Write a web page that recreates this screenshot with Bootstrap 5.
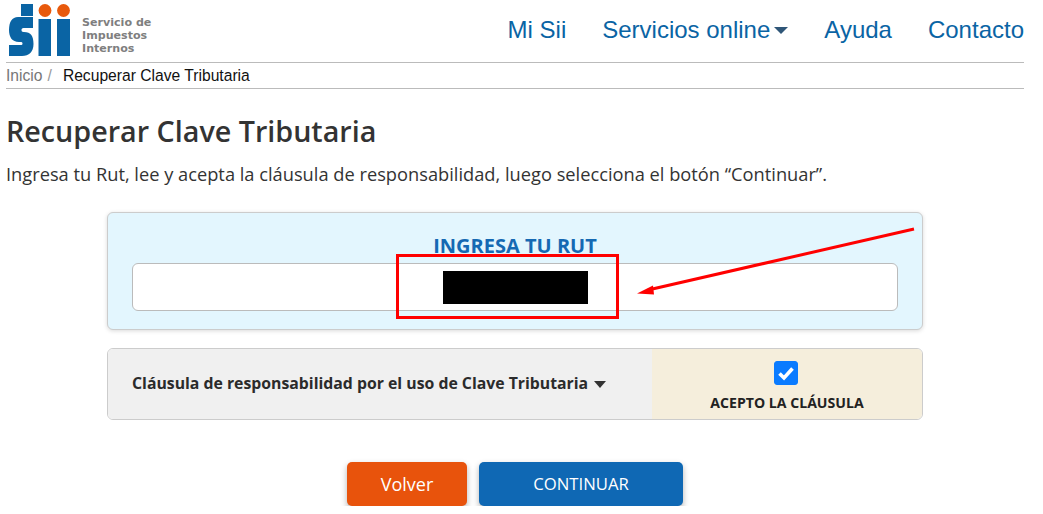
<!doctype html>
<html lang="es">
<head>
<meta charset="utf-8">
<title>Recuperar Clave Tributaria</title>
<link href="https://cdn.jsdelivr.net/npm/bootstrap@5.3.0/dist/css/bootstrap.min.css" rel="stylesheet">
<style>
body{font-family:"Open Sans",sans-serif;color:#333;background:#fff;overflow:hidden}
.page-wrap{width:1018px;margin-left:6px}
.site-head{height:63px;border-bottom:1px solid #bbb}
.logo-box{gap:10px;margin-left:2px;align-self:flex-start;padding-top:2px}
.logo-text{font-family:"DejaVu Sans",sans-serif;font-weight:700;font-size:11.1px;line-height:13px;color:#7f7f7f;padding-top:14px;white-space:nowrap}
.site-nav{gap:36px;padding-bottom:2px}
.site-nav a{font-family:"Liberation Sans",sans-serif;font-size:24px;color:#0a64a4;text-decoration:none;display:flex;align-items:center}
.nav-caret{width:0;height:0;border-left:7px solid transparent;border-right:7px solid transparent;border-top:7px solid #2f5678;margin-left:4px}
.crumbs{height:26px;border-bottom:1px solid #bbb;font-family:"Liberation Sans",sans-serif;font-size:15.65px;line-height:25px}
.crumbs .crumb-home{color:#777}
.crumbs .crumb-sep{color:#999;margin:0 11px 0 5px}
.crumbs .crumb-now{color:#111}
.page-title{font-size:28.7px;font-weight:600;color:#333;margin:24px 0 0;line-height:36px}
.page-lead{font-size:18.25px;color:#333;margin:13px 0 0;line-height:24px}
.form-area{width:816px;margin:26px auto 0}
.rut-panel{height:118px;background:#e3f6fe;border:1px solid #ccc;border-radius:6px;box-shadow:0 1px 4px rgba(0,0,0,.15);padding:21px 24px 0}
.rut-label{font-size:20px;font-weight:700;color:#1569b3;text-align:center;line-height:24px;margin-bottom:5px}
.rut-input{height:48px;border:1px solid #bbb;border-radius:6px;background:#fff;box-shadow:none}
.clause-panel{height:72px;margin-top:18px;border:1px solid #ccc;border-radius:6px;overflow:hidden}
.clause-text{flex:0 0 544px;background:#f0f0f0;padding-left:24px;font-size:15.8px;font-weight:700;color:#2b2b2b}
.clause-caret{display:inline-block;width:0;height:0;border-left:6.5px solid transparent;border-right:6.5px solid transparent;border-top:7px solid #333;margin-left:6px;vertical-align:1px}
.clause-accept{background:#f5eedc;font-size:14.1px;font-weight:700;color:#222;padding-top:12px}
.clause-accept .form-check-input{width:24px;height:24px;margin:0 2px 7px 0;background-color:#0a7bff;border-color:#0a7bff;border-radius:3px;opacity:1;background-size:24px;background-image:url("data:image/svg+xml,%3csvg xmlns='http://www.w3.org/2000/svg' viewBox='0 0 24 24'%3e%3cpath fill='none' stroke='%23fff' stroke-width='3.6' d='M5.5 12.5l4.5 4.5 8.5-9.5'/%3e%3c/svg%3e")}
.btn-row{gap:12px;margin-top:42px}
.btn-back,.btn-next{height:44px;border:0;border-radius:5px;color:#fff;box-shadow:0 3px 6px rgba(0,0,0,.3);font-family:"Open Sans",sans-serif}
.btn-back{width:120px;background:#e8530c;font-size:18px}
.btn-next{width:204px;background:#0f68b4;font-size:16.7px}
.btn-back:hover{background:#e8530c;color:#fff}
.btn-next:hover{background:#0f68b4;color:#fff}
.annot{position:absolute;left:0;top:0;pointer-events:none}
</style>
</head>
<body class="m-0">
<div class="page-wrap">
  <header class="site-head d-flex justify-content-between align-items-center">
    <div class="logo-box d-flex align-items-start">
      <svg width="64" height="56" viewBox="8 2 64 56" aria-label="SII">
        <rect x="21" y="4" width="12" height="12" fill="#0a64a4"/>
        <circle cx="45" cy="10.5" r="6.4" fill="#e8590c"/>
        <circle cx="63.5" cy="10.5" r="6.4" fill="#e8590c"/>
        <rect x="38.5" y="19" width="12.5" height="37" fill="#0a64a4"/>
        <rect x="57" y="19" width="13" height="37" fill="#0a64a4"/>
        <path d="M18 17H33V28H23.5C22 28 21.5 29 21.5 30C21.5 31 22 32 23.5 32H24C31 32 33.5 36 33.5 44C33.5 52 29 56 22 56H9V45H20.5C22 45 22.5 44.5 22.5 43.5C22.5 42.5 22 42 20.5 42H19C12 42 9 37 9 30C9 22 12 17 18 17Z" fill="#0a64a4"/>
      </svg>
      <div class="logo-text">Servicio de<br>Impuestos<br>Internos</div>
    </div>
    <nav class="site-nav d-flex">
      <a href="#">Mi Sii</a>
      <a href="#">Servicios online<span class="nav-caret"></span></a>
      <a href="#">Ayuda</a>
      <a href="#">Contacto</a>
    </nav>
  </header>
  <div class="crumbs"><span class="crumb-home">Inicio</span><span class="crumb-sep">/</span><span class="crumb-now">Recuperar Clave Tributaria</span></div>
  <h1 class="page-title">Recuperar Clave Tributaria</h1>
  <p class="page-lead">Ingresa tu Rut, lee y acepta la cláusula de responsabilidad, luego selecciona el botón “Continuar”.</p>
  <div class="form-area">
    <div class="rut-panel">
      <div class="rut-label">INGRESA TU RUT</div>
      <input class="form-control rut-input" type="text" aria-label="Rut">
    </div>
    <div class="clause-panel d-flex">
      <div class="clause-text d-flex align-items-center"><span>Cláusula de responsabilidad por el uso de Clave Tributaria<span class="clause-caret"></span></span></div>
      <div class="clause-accept flex-grow-1 d-flex flex-column align-items-center">
        <input class="form-check-input" type="checkbox" checked aria-label="Acepto la cláusula">
        <span>ACEPTO LA CLÁUSULA</span>
      </div>
    </div>
    <div class="btn-row d-flex justify-content-center">
      <button class="btn btn-back" type="button">Volver</button>
      <button class="btn btn-next" type="button">CONTINUAR</button>
    </div>
  </div>
</div>
<svg class="annot" width="1043" height="514" aria-hidden="true">
  <rect x="443" y="271" width="145" height="33" fill="#000"/>
  <rect x="397.5" y="255.5" width="220" height="62" fill="none" stroke="#f00" stroke-width="3"/>
  <line x1="914" y1="229" x2="648" y2="290" stroke="#f00" stroke-width="3"/>
  <polygon points="637,293.5 653,285.5 654,294.5" fill="#f00"/>
</svg>
<script src="https://cdn.jsdelivr.net/npm/bootstrap@5.3.0/dist/js/bootstrap.bundle.min.js"></script>
</body>
</html>
